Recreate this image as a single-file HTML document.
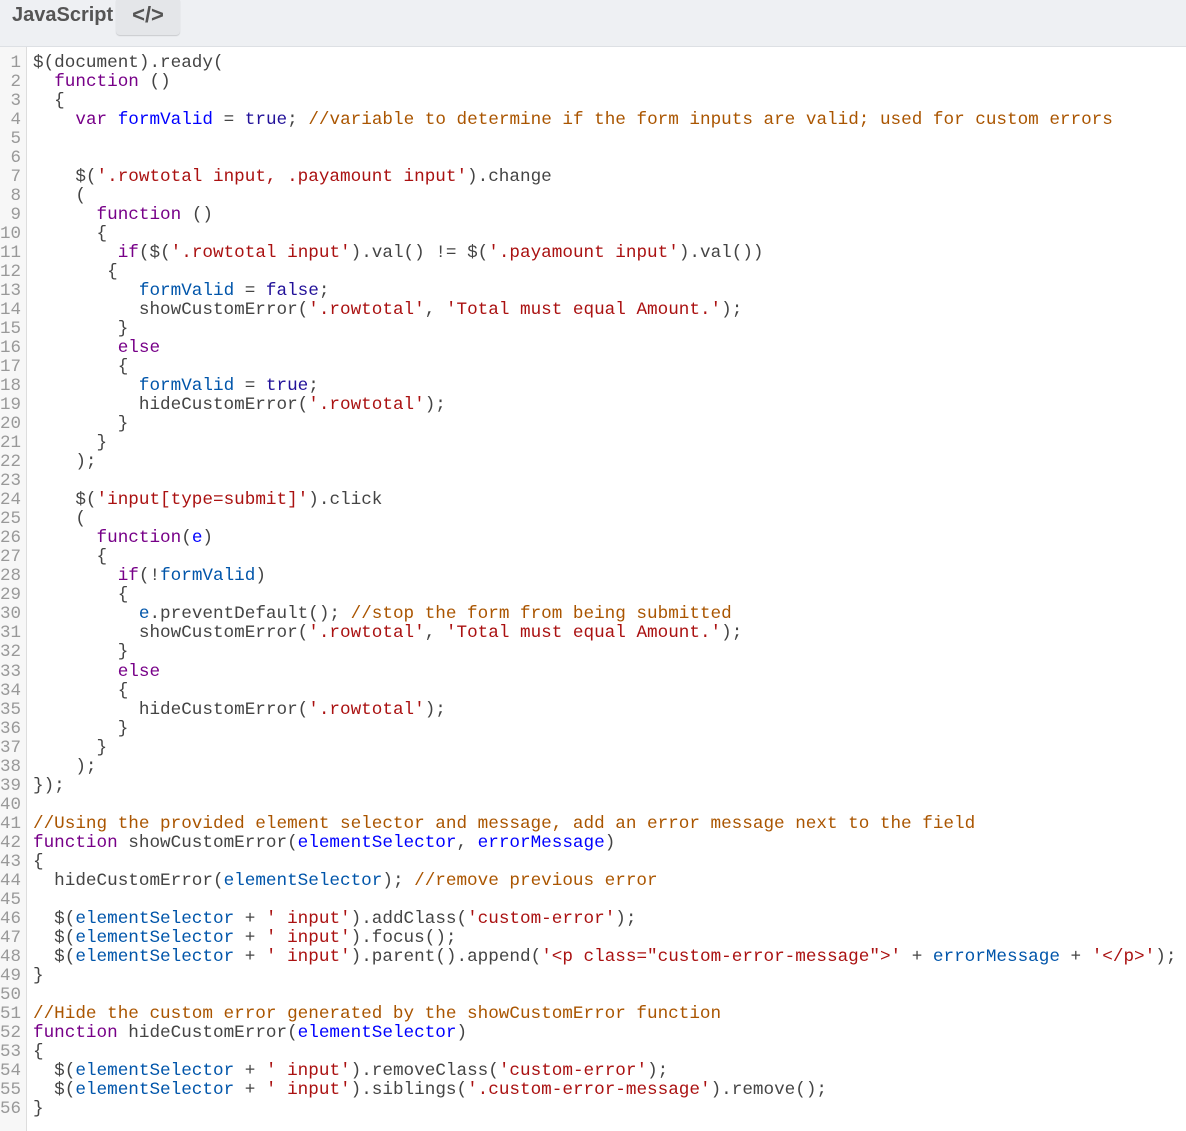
<!DOCTYPE html>
<html><head><meta charset="utf-8"><style>
html,body{margin:0;padding:0;background:#fff;width:1186px;height:1131px;overflow:hidden}
.hdr{position:absolute;left:0;top:0;width:1186px;height:46px;background:#eef0f3;border-bottom:1px solid #dde0e4}
.title{position:absolute;left:12px;top:4px;font:bold 20px "Liberation Sans",sans-serif;color:#555}
.tab{position:absolute;left:116px;top:0;width:64px;height:35px;background:#e4e6e9;border-radius:0 0 4px 4px;box-shadow:0 1px 1px #c8cacd;color:#555;font:bold 22px "Liberation Sans",sans-serif;text-align:center;line-height:30px}
.gut{position:absolute;left:0;top:47px;width:26px;height:1084px;background:#f7f7f7;border-right:1px solid #ddd}
pre{margin:0;position:absolute;top:54px;font-family:"Liberation Mono",monospace;font-size:17.65px;line-height:19.02px;color:#444}
.nums{left:0;width:21px;text-align:right;color:#999;font-size:17.5px}
.code{left:33px}
.k{color:#708}.d{color:#00f}.v{color:#05a}.a{color:#219}.s{color:#a11}.c{color:#a50}
</style></head><body>
<div class="hdr"><div class="title">JavaScript</div><div class="tab">&lt;/&gt;</div></div>
<div class="gut"></div>
<pre class="nums">1
2
3
4
5
6
7
8
9
10
11
12
13
14
15
16
17
18
19
20
21
22
23
24
25
26
27
28
29
30
31
32
33
34
35
36
37
38
39
40
41
42
43
44
45
46
47
48
49
50
51
52
53
54
55
56</pre>
<pre class="code">$(document).ready(
  <span class="k">function</span> ()
  {
    <span class="k">var</span> <span class="d">formValid</span> = <span class="a">true</span>; <span class="c">//variable to determine if the form inputs are valid; used for custom errors</span>


    $(<span class="s">'.rowtotal input, .payamount input'</span>).change
    (
      <span class="k">function</span> ()
      {
        <span class="k">if</span>($(<span class="s">'.rowtotal input'</span>).val() != $(<span class="s">'.payamount input'</span>).val())
       {
          <span class="v">formValid</span> = <span class="a">false</span>;
          showCustomError(<span class="s">'.rowtotal'</span>, <span class="s">'Total must equal Amount.'</span>);
        }
        <span class="k">else</span>
        {
          <span class="v">formValid</span> = <span class="a">true</span>;
          hideCustomError(<span class="s">'.rowtotal'</span>);
        }
      }
    );

    $(<span class="s">'input[type=submit]'</span>).click
    (
      <span class="k">function</span>(<span class="d">e</span>)
      {
        <span class="k">if</span>(!<span class="v">formValid</span>)
        {
          <span class="v">e</span>.preventDefault(); <span class="c">//stop the form from being submitted</span>
          showCustomError(<span class="s">'.rowtotal'</span>, <span class="s">'Total must equal Amount.'</span>);
        }
        <span class="k">else</span>
        {
          hideCustomError(<span class="s">'.rowtotal'</span>);
        }
      }
    );
});

<span class="c">//Using the provided element selector and message, add an error message next to the field</span>
<span class="k">function</span> showCustomError(<span class="d">elementSelector</span>, <span class="d">errorMessage</span>)
{
  hideCustomError(<span class="v">elementSelector</span>); <span class="c">//remove previous error</span>

  $(<span class="v">elementSelector</span> + <span class="s">' input'</span>).addClass(<span class="s">'custom-error'</span>);
  $(<span class="v">elementSelector</span> + <span class="s">' input'</span>).focus();
  $(<span class="v">elementSelector</span> + <span class="s">' input'</span>).parent().append(<span class="s">'&lt;p class="custom-error-message"&gt;'</span> + <span class="v">errorMessage</span> + <span class="s">'&lt;/p&gt;'</span>);
}

<span class="c">//Hide the custom error generated by the showCustomError function</span>
<span class="k">function</span> hideCustomError(<span class="d">elementSelector</span>)
{
  $(<span class="v">elementSelector</span> + <span class="s">' input'</span>).removeClass(<span class="s">'custom-error'</span>);
  $(<span class="v">elementSelector</span> + <span class="s">' input'</span>).siblings(<span class="s">'.custom-error-message'</span>).remove();
}</pre>
</body></html>
